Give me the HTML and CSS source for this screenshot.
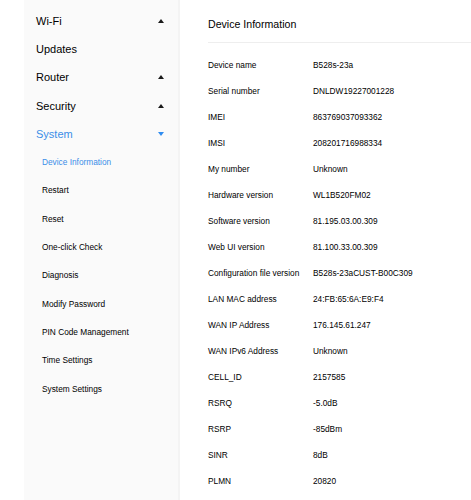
FILE: index.html
```html
<!DOCTYPE html>
<html>
<head>
<meta charset="utf-8">
<link rel="stylesheet" href="styles.css">
</head>
<body>
<div class="page">
  <div class="gutter"></div>
  <nav class="sidebar">
    <div class="nav-item"><span>Wi-Fi</span><span class="caret up"></span></div>
    <div class="nav-item"><span>Updates</span></div>
    <div class="nav-item"><span>Router</span><span class="caret up"></span></div>
    <div class="nav-item"><span>Security</span><span class="caret up"></span></div>
    <div class="nav-item active"><span>System</span><span class="caret down"></span></div>
    <div class="sub-item active">Device Information</div>
    <div class="sub-item">Restart</div>
    <div class="sub-item">Reset</div>
    <div class="sub-item">One-click Check</div>
    <div class="sub-item">Diagnosis</div>
    <div class="sub-item">Modify Password</div>
    <div class="sub-item">PIN Code Management</div>
    <div class="sub-item">Time Settings</div>
    <div class="sub-item">System Settings</div>
  </nav>
  <main class="main">
    <h1 class="title">Device Information</h1>
    <div class="info">
      <div class="row"><span class="label">Device name</span><span class="value">B528s-23a</span></div>
      <div class="row"><span class="label">Serial number</span><span class="value">DNLDW19227001228</span></div>
      <div class="row"><span class="label">IMEI</span><span class="value">863769037093362</span></div>
      <div class="row"><span class="label">IMSI</span><span class="value">208201716988334</span></div>
      <div class="row"><span class="label">My number</span><span class="value">Unknown</span></div>
      <div class="row"><span class="label">Hardware version</span><span class="value">WL1B520FM02</span></div>
      <div class="row"><span class="label">Software version</span><span class="value">81.195.03.00.309</span></div>
      <div class="row"><span class="label">Web UI version</span><span class="value">81.100.33.00.309</span></div>
      <div class="row"><span class="label">Configuration file version</span><span class="value">B528s-23aCUST-B00C309</span></div>
      <div class="row"><span class="label">LAN MAC address</span><span class="value">24:FB:65:6A:E9:F4</span></div>
      <div class="row"><span class="label">WAN IP Address</span><span class="value">176.145.61.247</span></div>
      <div class="row"><span class="label">WAN IPv6 Address</span><span class="value">Unknown</span></div>
      <div class="row"><span class="label">CELL_ID</span><span class="value">2157585</span></div>
      <div class="row"><span class="label">RSRQ</span><span class="value">-5.0dB</span></div>
      <div class="row"><span class="label">RSRP</span><span class="value">-85dBm</span></div>
      <div class="row"><span class="label">SINR</span><span class="value">8dB</span></div>
      <div class="row"><span class="label">PLMN</span><span class="value">20820</span></div>
      <div class="row"><span class="label">&nbsp;</span><span class="value">&nbsp;</span></div>
    </div>
  </main>
</div>
</body>
</html>
```

FILE: styles.css
```css
html, body {
  margin: 0;
  padding: 0;
  background: #ffffff;
  font-family: "Liberation Sans", Arial, sans-serif;
  color: #000;
}

.page {
  display: flex;
  height: 500px;
  overflow: hidden;
}

.gutter {
  width: 24px;
  flex: none;
  background: #ffffff;
}

.sidebar {
  width: 154px;
  flex: none;
  background: #fafafa;
  border-right: 2px solid #f4f4f4;
  padding-top: 6.5px;
  box-sizing: content-box;
}

.nav-item {
  height: 28.3px;
  display: flex;
  align-items: center;
  justify-content: space-between;
  padding: 0 14px 0 12px;
  font-size: 11px;
  color: #000;
}

.nav-item.active {
  color: #3a8ee8;
}

.caret {
  width: 0;
  height: 0;
  border-left: 3.5px solid transparent;
  border-right: 3.5px solid transparent;
}

.caret.up {
  border-bottom: 4px solid #1a1a1a;
}

.caret.down {
  border-top: 4px solid #2f8cf0;
}

.sub-item {
  height: 28.3px;
  display: flex;
  align-items: center;
  padding-left: 18px;
  font-size: 8.3px;
  color: #000;
}

.sub-item.active {
  color: #3a8ee8;
}

.main {
  flex: 1;
  min-width: 0;
  padding-left: 28px;
  padding-top: 1px;
}

.title {
  margin: 0;
  height: 41px;
  line-height: 46px;
  font-size: 10.6px;
  font-weight: normal;
  color: #000;
  border-bottom: 1.5px solid #eeeeee;
  box-sizing: content-box;
}

.info {
  padding-top: 8.5px;
}

.row {
  height: 26px;
  display: flex;
  align-items: center;
  font-size: 8.3px;
  color: #000;
}

.label {
  width: 105px;
  flex: none;
  white-space: nowrap;
}

.value {
  white-space: nowrap;
}
```
